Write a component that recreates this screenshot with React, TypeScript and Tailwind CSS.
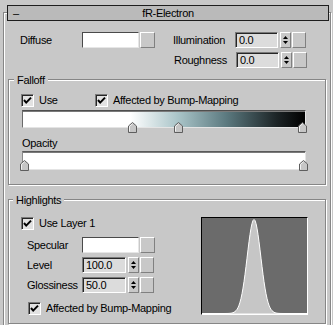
import React from 'react'

const etched = 'border border-[#868686] shadow-[inset_1px_1px_0_#ffffff,1px_1px_0_#ffffff]'
const raised = 'border border-t-white border-l-white border-b-[#808080] border-r-[#808080] bg-[#c8c8c8]'
const sunken = 'border border-t-[#7a7a7a] border-l-[#7a7a7a] border-b-white border-r-white shadow-[inset_1px_1px_0_#262626]'

const CheckBox = ({ label }: { label: string }) => (
  <div className="flex items-center">
    <div className={`flex h-[13px] w-[13px] items-center justify-center bg-[#e2e2e2] ${sunken}`}>
      <svg width="11" height="11" viewBox="0 0 11 11">
        <path d="M2 5 L4.2 7.6 L9 2.6" fill="none" stroke="#000" strokeWidth="2" />
      </svg>
    </div>
    <span className="ml-[5px] leading-[13px]">{label}</span>
  </div>
)

const Swatch = () => (
  <div className="flex">
    <div className="h-[16px] w-[57px] border border-t-[#4a4a4a] border-l-[#4a4a4a] border-b-[#e6e6e6] border-r-[#e6e6e6] bg-white" />
    <div className={`ml-[1px] h-[16px] w-[15px] ${raised}`} />
  </div>
)

const Arrows = () => (
  <div className={`ml-[2px] flex h-[16px] w-[11px] flex-col items-center justify-center gap-[2px] ${raised}`}>
    <svg width="5" height="3" viewBox="0 0 5 3">
      <path d="M2.5 0 L5 3 L0 3 Z" fill="#000" />
    </svg>
    <svg width="5" height="3" viewBox="0 0 5 3">
      <path d="M0 0 L5 0 L2.5 3 Z" fill="#000" />
    </svg>
  </div>
)

const Spinner = ({ value, width }: { value: string; width: string }) => (
  <div className="flex items-center">
    <div className={`h-[16px] ${width} bg-[#dcdcdc] pl-[3px] leading-[14px] ${sunken}`}>{value}</div>
    <Arrows />
    <div className={`ml-[1px] h-[16px] w-[14px] ${raised}`} />
  </div>
)

const Marker = ({ pos }: { pos: string }) => (
  <svg className={`absolute ${pos}`} width="9" height="11" viewBox="0 0 9 11">
    <path d="M0.5 10.5 V4 L4.5 0.5 L8.5 4 V10.5 Z" fill="#c6c6c6" stroke="#5e5e5e" />
    <path d="M1.5 9.5 V4.4 L4.5 1.8" fill="none" stroke="#f2f2f2" />
  </svg>
)

const curve = () => {
  const pts: string[] = []
  for (let x = 0; x <= 105; x++) {
    const d = x - 52
    const y = 95.5 - 94 * Math.exp(-(d * d) / (2 * 6.8 * 6.8))
    pts.push(`${x},${y.toFixed(2)}`)
  }
  return `M0,96 L${pts.join(' L')} L105,96 Z`
}

export default function App() {
  return (
    <div className="h-[325px] w-[333px] overflow-hidden bg-[#c8c8c8] font-['Liberation_Sans',Arial,sans-serif] text-[11px] tracking-[-0.3px] text-black">
      <div className={`ml-[3px] mt-[12px] h-[340px] w-[328px] ${etched}`}>
        {/* rollout title */}
        <div className="-mt-[8px] ml-[3px] flex h-[16px] w-[322px] items-center border border-[#1e1e1e] bg-[#bababa] leading-[14px]">
          <span className="w-[25px] pl-[5px]">–</span>
          <span className="flex-1 text-center">fR-Electron</span>
          <span className="w-[25px]" />
        </div>

        <div className="mt-[11px] flex h-[16px] items-center">
          <span className="ml-[16px] w-[62px]">Diffuse</span>
          <Swatch />
          <span className="ml-[18px] w-[62px]">Illumination</span>
          <Spinner value="0.0" width="w-[43px]" />
        </div>
        <div className="mt-[4px] flex h-[16px] items-center">
          <span className="ml-[170px] w-[62px]">Roughness</span>
          <Spinner value="0.0" width="w-[43px]" />
        </div>

        {/* Falloff */}
        <div className={`relative ml-[4px] mt-[11px] h-[106px] w-[318px] ${etched}`}>
          <span className="absolute -top-[7px] left-[5px] bg-[#c8c8c8] px-[3px] leading-[14px]">Falloff</span>
          <div className="ml-[12px] mt-[14px] flex">
            <div className="w-[74px]">
              <CheckBox label="Use" />
            </div>
            <CheckBox label="Affected by Bump-Mapping" />
          </div>
          <div className="relative ml-[13px] mt-[3px] h-[18px] w-[284px]">
            <div className="h-full w-full border border-t-[#4e4e4e] border-l-[#6a6a6a] border-b-[#e4e4e4] border-r-[#e4e4e4] bg-[linear-gradient(to_right,#ffffff_38%,#a9c4c8_55%,#5c7a80_72%,#1c2426_90%,#000000_100%)] shadow-[inset_0_1px_0_#7a7a7a]" />
            <Marker pos="left-[106px] top-[12px]" />
            <Marker pos="left-[152px] top-[12px]" />
            <Marker pos="left-[276px] top-[12px]" />
          </div>
          <div className="ml-[13px] mt-[9px] leading-[13px]">Opacity</div>
          <div className="relative ml-[13px] mt-[1px] h-[19px] w-[284px]">
            <div className="h-full w-full border border-t-[#5a5a5a] border-l-[#8a8a8a] border-b-[#e4e4e4] border-r-[#e4e4e4] bg-white shadow-[inset_0_1px_0_#7a7a7a]" />
            <Marker pos="-left-[2px] top-[9px]" />
            <Marker pos="left-[277px] top-[9px]" />
          </div>
        </div>

        {/* Highlights */}
        <div className={`relative ml-[4px] mt-[14px] h-[125px] w-[318px] ${etched}`}>
          <span className="absolute -top-[7px] left-[4px] bg-[#c8c8c8] px-[3px] leading-[14px]">Highlights</span>
          <div className="flex">
            <div className="w-[192px]">
              <div className="ml-[12px] mt-[17px]">
                <CheckBox label="Use Layer 1" />
              </div>
              <div className="mt-[7px] flex h-[16px] items-center">
                <span className="ml-[18px] w-[55px]">Specular</span>
                <Swatch />
              </div>
              <div className="mt-[4px] flex h-[16px] items-center">
                <span className="ml-[18px] w-[55px]">Level</span>
                <Spinner value="100.0" width="w-[44px]" />
              </div>
              <div className="mt-[4px] flex h-[16px] items-center">
                <span className="ml-[18px] w-[55px]">Glossiness</span>
                <Spinner value="50.0" width="w-[44px]" />
              </div>
              <div className="ml-[19px] mt-[9px]">
                <CheckBox label="Affected by Bump-Mapping" />
              </div>
            </div>
            <div className="mt-[17px] h-[98px] w-[107px] border border-t-black border-l-black border-b-white border-r-white bg-[#6b6b6b]">
              <svg width="105" height="96" viewBox="0 0 105 96" className="block">
                <path d={curve()} fill="#c6c6c6" stroke="#ffffff" strokeWidth="1" />
              </svg>
            </div>
          </div>
        </div>
      </div>
    </div>
  )
}
